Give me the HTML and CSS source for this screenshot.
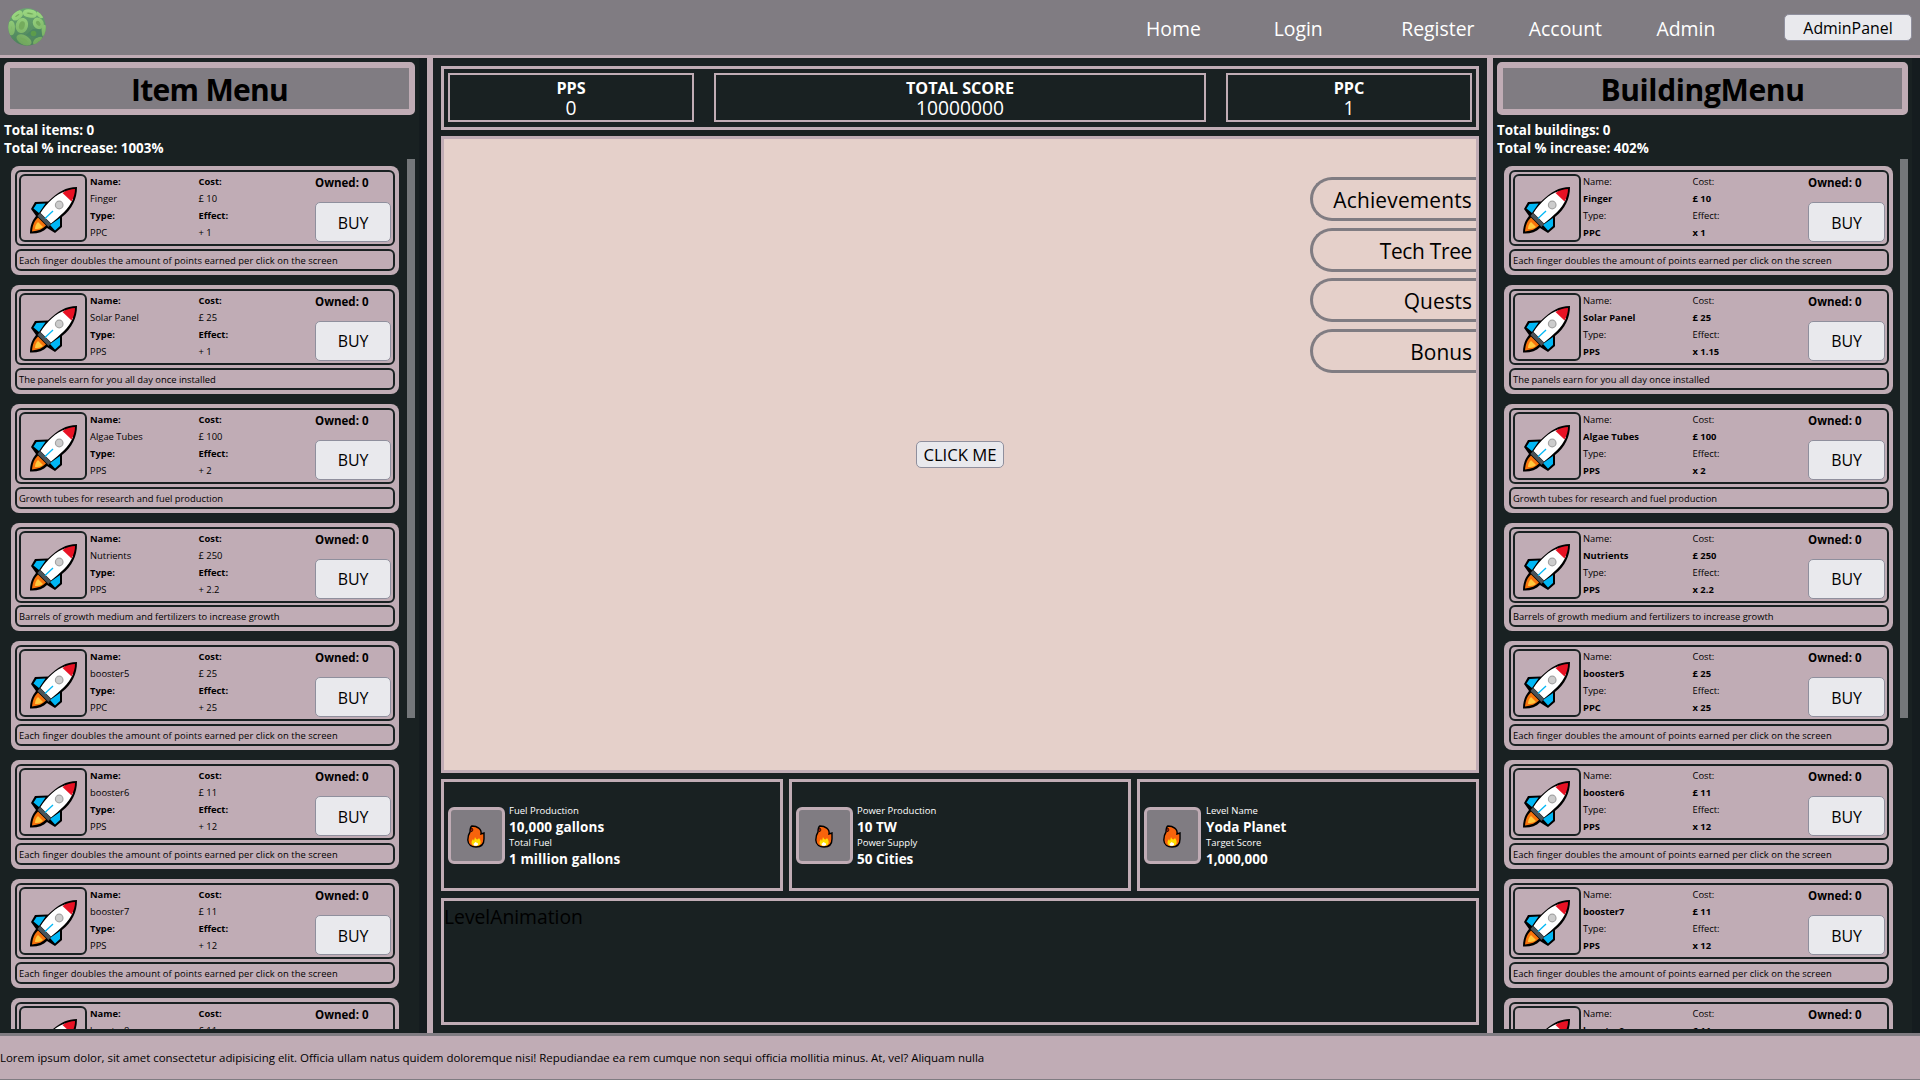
FILE: index.html
```html
<!DOCTYPE html>
<html lang="en">
<head>
<meta charset="utf-8">
<title>Space Clicker</title>
<link rel="stylesheet" href="styles.css">
</head>
<body>
<svg class="defs" width="0" height="0" aria-hidden="true">
  <symbol id="rocket" viewBox="0 0 47 47">
    <path d="M47 0C36 0 28 5 18 14.500L5 15L1 22L6 29C2 34 0 39 0 46.500C7 47 13 45 17 41L25 46L32 40V30C42 22 47 12 47 0Z" fill="#000"/>
    <path d="M6.500 17L15.500 16.500L9 26L3.500 21.500Z M30 31V39L25 43.500L20 38Z" fill="#00b7f5"/>
    <path d="M8 30.500L16 38.500C13 42 8 44 2 44.500C2.500 39 4 34 8 30.500Z" fill="#f7730c"/>
    <path d="M8 35L13 40C10 42 8 42 5 42C5 39 6 37 8 35Z" fill="#ffc83d"/>
    <path d="M10 26L21 37L18.500 40L7.500 29Z" fill="#4a5459"/>
    <path d="M10.500 26C17 16 26 7 35 4.500L43 12C39 22 30 29 21 36.500Z" fill="#fff"/>
    <path d="M32.500 6C37 3 41 2 45 2C45 6 44 10 41.500 14.500Z" fill="#e81224"/>
    <circle cx="29.200" cy="18" r="3.800" fill="#ccc" stroke="#a3a3a3" stroke-width="1.200"/>
    <path d="M15 31.500L23 24" stroke="#00b7f5" stroke-width="1.300"/>
  </symbol>
  <symbol id="flame" viewBox="0 0 18 23">
    <path d="M5 1C3 2 3 4 3 7C1 10 .800 12 .800 15C1 20 5 22 9 22C14 22 17 19 17 14V8L14 9C15 4 10 1 5 1Z" fill="#f7630c" stroke="#000" stroke-width="1.400"/>
    <path d="M3.500 5L5 3L6 5L4.500 7Z" fill="#c02010" stroke="#000" stroke-width=".7"/>
    <path d="M8 12C9 15 11 15 12 13C15 17 14 21 9 21C4 21 3.500 17 6 14L7 16Z" fill="#ffde00"/>
    <path d="M8.500 17L11 18.500C12 21 6.500 22 6.500 19Z" fill="#fff"/>
  </symbol>
</svg>
<header class="topbar">
  <svg class="logo" viewBox="0 0 38 38" role="img" aria-label="Logo">
    <defs>
      <linearGradient id="globe" x1="0" y1="0" x2="0" y2="1"><stop offset="0" stop-color="#69a770"/><stop offset="1" stop-color="#4c815b"/></linearGradient>
      <linearGradient id="ring" gradientUnits="userSpaceOnUse" x1="0" y1="0" x2="0" y2="38"><stop offset="0" stop-color="#9fdc84"/><stop offset="1" stop-color="#6ea35c"/></linearGradient>
      <clipPath id="disc"><circle cx="19" cy="19" r="18.800"/></clipPath>
    </defs>
    <g clip-path="url(#disc)">
      <rect width="38" height="38" fill="url(#globe)"/>
      <g fill="#74ab5d" stroke="url(#ring)" stroke-width="3.300">
        <ellipse cx="14" cy="17.500" rx="4.500" ry="6" transform="rotate(15 14 17)"/>
        <ellipse cx="22" cy="5.500" rx="5.500" ry="2.500" transform="rotate(10 22 5)"/>
        <ellipse cx="30" cy="15.500" rx="3.500" ry="4.500" transform="rotate(-40 30 15)"/>
        <ellipse cx="9" cy="7.500" rx="4.500" ry="2.300" transform="rotate(-35 9 7)"/>
        <ellipse cx="3.500" cy="20" rx="1.800" ry="5.500"/>
        <ellipse cx="16" cy="32" rx="6.500" ry="3" transform="rotate(30 16 32)"/>
        <ellipse cx="30" cy="33.500" rx="4" ry="2.300" transform="rotate(-35 30 33)"/>
        <ellipse cx="36.500" cy="23" rx="1.200" ry="4.500"/>
        <ellipse cx="32.500" cy="6" rx="2.500" ry="1.500" transform="rotate(45 32 6)"/>
      </g>
      <path d="M25 21L33 21.500L34 28L28 30L18 27Z" fill="#4c8862"/>
      <circle cx="25.500" cy="25.500" r="2.800" fill="#5c9c4b"/>
    </g>
  </svg>
  <nav class="nav">
    <a>Home</a><a>Login</a><a>Register</a><a>Account</a><a>Admin</a>
  </nav>
  <button class="btn admin-btn">AdminPanel</button>
</header>
<main class="game">
  <aside class="side side-left">
    <h1 class="side-title">Item Menu</h1>
    <div class="totals"><p>Total items: 0</p><p>Total % increase: 1003%</p></div>
    <div class="list-wrap"><div class="list" id="items"></div><div class="track"><div class="thumb"></div></div></div>
  </aside>
  <section class="center">
    <div class="scores">
      <div class="score"><b>PPS</b><span>0</span></div>
      <div class="score"><b>TOTAL SCORE</b><span>10000000</span></div>
      <div class="score"><b>PPC</b><span>1</span></div>
    </div>
    <div class="stage">
      <ul class="tabs">
        <li class="tab-achievements">Achievements</li><li class="tab-tech">Tech Tree</li><li>Quests</li><li>Bonus</li>
      </ul>
      <button class="btn click-btn">CLICK ME</button>
    </div>
    <div class="stats">
      <div class="stat"><div class="stat-icon"><svg><use href="#flame"/></svg></div>
        <div class="stat-text fuel"><span>Fuel Production</span><b>10,000 gallons</b><span>Total Fuel</span><b>1 million gallons</b></div></div>
      <div class="stat"><div class="stat-icon"><svg><use href="#flame"/></svg></div>
        <div class="stat-text"><span>Power Production</span><b>10 TW</b><span>Power Supply</span><b>50 Cities</b></div></div>
      <div class="stat"><div class="stat-icon"><svg><use href="#flame"/></svg></div>
        <div class="stat-text level"><span>Level Name</span><b>Yoda Planet</b><span>Target Score</span><b>1,000,000</b></div></div>
    </div>
    <div class="animation">LevelAnimation</div>
  </section>
  <aside class="side side-right">
    <h1 class="side-title">BuildingMenu</h1>
    <div class="totals"><p>Total buildings: 0</p><p>Total % increase: 402%</p></div>
    <div class="list-wrap"><div class="list" id="buildings"></div><div class="track"><div class="thumb"></div></div></div>
  </aside>
</main>
<footer class="footer">Lorem ipsum dolor, sit amet consectetur adipisicing elit. Officia ullam natus quidem doloremque nisi! Repudiandae ea rem cumque non sequi officia mollitia minus. At, vel? Aliquam nulla</footer>
<script src="game.js"></script>
</body>
</html>
```
FILE: styles.css
```css
* { box-sizing: border-box; margin: 0; padding: 0; }
:root { --dark: #192122; --mauve: #c0acb5; --grey: #807c82; --pink: #e5d0ca; }
body { width: 1920px; height: 1080px; overflow: hidden; display: flex; flex-direction: column; background: var(--dark); color: #000; font-family: "Open Sans", "Noto Sans", sans-serif; }
.defs { position: absolute; }
.topbar { flex: 0 0 58px; display: flex; align-items: flex-start; background: var(--grey); border-bottom: 3px solid var(--mauve); padding: 0 8px; }
.logo { width: 38px; height: 38px; margin-top: 8px; }
.nav { display: flex; margin-left: auto; padding-top: 15px; }
.nav a { width: 127.6px; color: #fff; font-size: 19.4px; line-height: 28px; }
.btn { font-family: inherit; font-size: 15.9px; color: #000; background: #e9e9ed; border: 1px solid #8f8f9d; border-radius: 5px; }
.admin-btn { width: 128px; height: 27px; margin-top: 14px; line-height: 24px; }
.game { flex: 0 0 975px; height: 975px; min-height: 0; display: flex; }
.side { width: 433px; display: flex; flex-direction: column; padding: 4px 12px 4px 4px; background: linear-gradient(#151c1f, #151c1f) right / 8px 100% no-repeat; }
.side-left { border-right: 6px solid var(--mauve); }
.side-right { border-left: 6px solid var(--mauve); }
.side-title { height: 53px; border: 6px solid var(--mauve); border-radius: 5px; background: var(--grey); font-size: 30px; font-weight: 700; line-height: 43px; text-align: center; letter-spacing: -0.7px; }
.side-right .side-title { letter-spacing: -0.35px; }
.totals { height: 44px; padding-top: 6px; color: #fff; font-size: 13.4px; font-weight: 700; line-height: 18px; }
.list-wrap { flex: 1; min-height: 0; display: flex; justify-content: space-between; }
.list { width: 395px; padding: 7px 0 0 7px; overflow: hidden; }
.side-right .list { width: 396px; }
.track { width: 8px; }
.thumb { height: 559px; background: #74777a; }
.card { height: 108.860px; margin-bottom: 10px; padding: 4px; background: var(--mauve); border-radius: 8px; display: flex; flex-direction: column; justify-content: space-between; }
.side-right .card { padding-left: 5px; }
.card-main { height: 76px; border: 2px solid var(--dark); border-radius: 6px; padding: 2px; display: flex; }
.card-icon { width: 68px; height: 68px; border: 2px solid var(--dark); border-radius: 6px; padding: 11px 0 0 9px; }
.side-right .card-icon { padding-left: 8px; }
.card-icon svg { width: 47px; height: 47px; display: block; }
.col { font-size: 9.4px; line-height: 17px; margin-top: -1px; padding-left: 3px; width: 108.500px; }
.col.cost { width: 116.500px; }
.side-right .col { padding-left: 2px; }
.side-right .col.cost { padding-left: 3px; }
.buy-col { flex: 1; display: flex; flex-direction: column; justify-content: space-between; padding-left: 3px; }
.side-right .buy-col { padding-left: 2px; }
.owned { font-size: 11.5px; font-weight: 700; line-height: 18px; }
.buy { height: 40px; padding-top: 1px; }
.desc { height: 22px; border: 2px solid var(--dark); border-radius: 6px; font-size: 9.4px; line-height: 19px; padding-left: 2px; white-space: nowrap; }
.desc.long { letter-spacing: 0.06px; }
.center { flex: 1; display: flex; flex-direction: column; padding: 8px; }
.scores { height: 64px; border: 3px solid var(--mauve); padding: 4px; display: grid; grid-template-columns: 246px 492px 246px; justify-content: space-between; }
.score { height: 49px; border: 2px solid var(--mauve); display: flex; flex-direction: column; align-items: center; color: #fff; font-size: 19.2px; line-height: 20px; padding-top: 3px; }
.score b { font-size: 16.2px; }
.stage { height: 637px; margin-top: 6px; border: 3px solid var(--mauve); background: var(--pink); display: flex; flex-direction: column; align-items: center; padding-top: 38px; }
.tabs { list-style: none; align-self: flex-end; width: 166px; display: flex; flex-direction: column; gap: 6.670px; }
.tabs li { height: 44px; border: 3px solid var(--grey); border-right: 0; border-radius: 22px 0 0 22px; font-size: 20.9px; line-height: 40px; text-align: right; padding-right: 4px; }
.tabs .tab-achievements { letter-spacing: 0.18px; }
.tabs .tab-tech { letter-spacing: -0.3px; }
.click-btn { width: 88px; height: 27px; margin-top: 68px; line-height: 26px; font-size: 16.7px; }
.stats { height: 112px; margin-top: 6px; display: grid; grid-template-columns: repeat(3, 1fr); gap: 6px; }
.stat { border: 3px solid var(--mauve); display: flex; align-items: center; padding-left: 4px; }
.stat-icon { width: 57px; height: 57px; border: 3px solid var(--mauve); border-radius: 6px; background: var(--grey); display: flex; align-items: center; justify-content: center; }
.stat-icon svg { width: 18px; height: 23px; margin: 3px 1px 0 0; }
.stat-text { display: flex; flex-direction: column; color: #fff; padding-left: 4px; font-size: 9.500px; line-height: 16px; }
.stat-text.level { padding-left: 5px; }
.stat-text b { font-size: 13.5px; }
.stat-text.fuel b { letter-spacing: 0.1px; }
.animation { height: 127px; margin-top: 7px; border: 3px solid var(--mauve); font-size: 19.3px; line-height: 31px; }
.footer { flex: 0 0 47px; border: solid var(--grey); border-width: 3px 0; background: var(--mauve); font-size: 11.500px; letter-spacing: -0.04px; line-height: 43px; white-space: nowrap; }
```
FILE: game.js
```js
const each = "Each finger doubles the amount of points earned per click on the screen";
const goods = [
  ["Finger", 10, "PPC", "1", "1", each],
  ["Solar Panel", 25, "PPS", "1", "1.15", "The panels earn for you all day once installed"],
  ["Algae Tubes", 100, "PPS", "2", "2", "Growth tubes for research and fuel production"],
  ["Nutrients", 250, "PPS", "2.2", "2.2", "Barrels of growth medium and fertilizers to increase growth"],
  ["booster5", 25, "PPC", "25", "25", each],
  ["booster6", 11, "PPS", "12", "12", each],
  ["booster7", 11, "PPS", "12", "12", each],
  ["booster8", 11, "PPS", "12", "12", each]
];

function card([name, cost, type, add, multiply, text], building) {
  const label = building ? "span" : "b";
  const value = building ? "b" : "span";
  const line = (tag, content) => `<div><${tag}>${content}</${tag}></div>`;
  const effect = building ? `x ${multiply}` : `+ ${add}`;
  return `<article class="card"><div class="card-main">
    <div class="card-icon"><svg><use href="#rocket"/></svg></div>
    <div class="col">${line(label, "Name:")}${line(value, name)}${line(label, "Type:")}${line(value, type)}</div>
    <div class="col cost">${line(label, "Cost:")}${line(value, "£ " + cost)}${line(label, "Effect:")}${line(value, effect)}</div>
    <div class="buy-col"><div class="owned">Owned: 0</div><button class="btn buy">BUY</button></div>
  </div><div class="desc${text === each ? " long" : ""}">${text}</div></article>`;
}

document.getElementById("items").innerHTML = goods.map(g => card(g, false)).join("");
document.getElementById("buildings").innerHTML = goods.map(g => card(g, true)).join("");
```
